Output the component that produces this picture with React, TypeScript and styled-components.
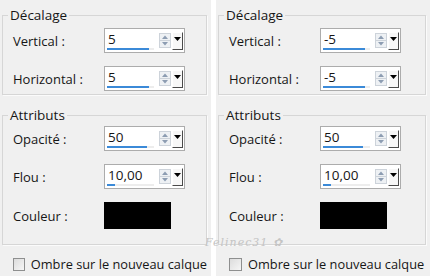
import styled, { createGlobalStyle } from "styled-components";

const GlobalStyle = createGlobalStyle`
  body {
    margin: 0;
    background: #fff;
    font-family: "Open Sans", "Noto Sans", sans-serif;
  }
`;

const Screen = styled.div`
  position: relative;
  display: grid;
  grid-template-columns: 211px 214px;
  column-gap: 5px;
  width: 430px;
  height: 276px;
  background: #fff;
  overflow: hidden;
`;

const Panel = styled.div`
  display: flex;
  flex-direction: column;
  background: #f0f0f0;
  padding: 6px 4px 0 2px;
  color: #161616;
  font-size: 13px;
  font-weight: 500;
  white-space: nowrap;
`;

const Group = styled.fieldset<{ $top: number; $pad: number; $bottom: number }>`
  margin: ${({ $top }) => $top}px 0 0;
  padding: ${({ $pad }) => $pad}px 10px ${({ $bottom }) => $bottom}px;
  border: 1px solid #d6d6d6;
  box-shadow: 1px 1px 0 #fbfbfb;
  min-width: 0;

  legend {
    margin-left: -5px;
    padding: 0 2px;
    line-height: 18px;
    font-size: 13.5px;
  }
`;

const Rows = styled.div`
  display: flex;
  flex-direction: column;
  gap: 13px;
`;

const Row = styled.div`
  display: grid;
  grid-template-columns: 91px auto;
  align-items: center;
`;

const Field = styled.div`
  display: flex;
  align-items: center;
  width: 81px;
  height: 25px;
  box-sizing: border-box;
  border: 1px solid #acacac;
  background: #fff;
`;

const ValueArea = styled.div`
  flex: 1;
  align-self: stretch;
  display: flex;
  flex-direction: column;
  justify-content: flex-end;
  padding: 0 5px 2px 3px;
  line-height: 16px;
  font-size: 13.5px;
  font-weight: 400;
`;

const Track = styled.div`
  height: 2px;
  margin: 1px 0 0 -1px;
  background: #ededed;
`;

const Bar = styled.div<{ $w: number }>`
  height: 2px;
  width: ${({ $w }) => $w}px;
  background: #3b8ad8;
`;

const DropButton = styled.div`
  display: flex;
  justify-content: center;
  align-items: flex-start;
  width: 11px;
  height: 18px;
  margin: 0 1px 0 1px;
  box-sizing: border-box;
  padding-top: 4px;
  background: #f7f7f7;
  border-top: 1px solid #fff;
  border-left: 1px solid #fff;
  border-right: 1px solid #4a4a4a;
  border-bottom: 1px solid #4a4a4a;
`;

const Swatch = styled.div`
  width: 67px;
  height: 27px;
  background: #000;
`;

const CheckRow = styled.label`
  display: flex;
  align-items: center;
  gap: 6px;
  height: 20px;
  margin: 9px 0 0 11px;
  font-size: 12.8px;
`;

const Box = styled.span`
  width: 13px;
  height: 13px;
  box-sizing: border-box;
  border: 1px solid #8e8f8f;
  background: linear-gradient(135deg, #dcdcdc, #f6f6f6);
`;

const Watermark = styled.span`
  position: absolute;
  left: 205px;
  top: 236px;
  font-family: "DejaVu Serif", serif;
  font-style: italic;
  font-size: 11px;
  letter-spacing: 1px;
  color: #c4c4c4;
`;

const Spin = () => (
  <svg width="12" height="15" viewBox="0 0 12 15">
    <rect x="0.5" y="0.5" width="11" height="14" fill="#eef1f4" stroke="#cdd3da" />
    <line x1="1" y1="7.5" x2="11" y2="7.5" stroke="#cdd3da" />
    <polygon points="3,6 6,2.5 9,6" fill="#8d9db2" />
    <polygon points="3,9 9,9 6,12.5" fill="#8d9db2" />
  </svg>
);

const SpinField = ({ value, bar }: { value: string; bar: number }) => (
  <Field>
    <ValueArea>
      <span>{value}</span>
      <Track>
        <Bar $w={bar} />
      </Track>
    </ValueArea>
    <Spin />
    <DropButton>
      <svg width="7" height="4" viewBox="0 0 7 4">
        <polygon points="0,0 7,0 3.5,4" fill="#000" />
      </svg>
    </DropButton>
  </Field>
);

const Settings = ({ offset }: { offset: string }) => (
  <Panel>
    <Group $top={0} $pad={4} $bottom={3}>
      <legend>Décalage</legend>
      <Rows>
        <Row>
          <span>Vertical :</span>
          <SpinField value={offset} bar={42} />
        </Row>
        <Row>
          <span>Horizontal :</span>
          <SpinField value={offset} bar={42} />
        </Row>
      </Rows>
    </Group>

    <Group $top={11} $pad={2} $bottom={15}>
      <legend>Attributs</legend>
      <Rows>
        <Row>
          <span>Opacité :</span>
          <SpinField value="50" bar={40} />
        </Row>
        <Row>
          <span>Flou :</span>
          <SpinField value="10,00" bar={8} />
        </Row>
        <Row>
          <span>Couleur :</span>
          <Swatch />
        </Row>
      </Rows>
    </Group>

    <CheckRow>
      <Box />
      <span>Ombre sur le nouveau calque</span>
    </CheckRow>
  </Panel>
);

const App = () => (
  <Screen>
    <GlobalStyle />
    <Settings offset="5" />
    <Settings offset="-5" />
    <Watermark>Felinec31 ✿</Watermark>
  </Screen>
);

export default App;
